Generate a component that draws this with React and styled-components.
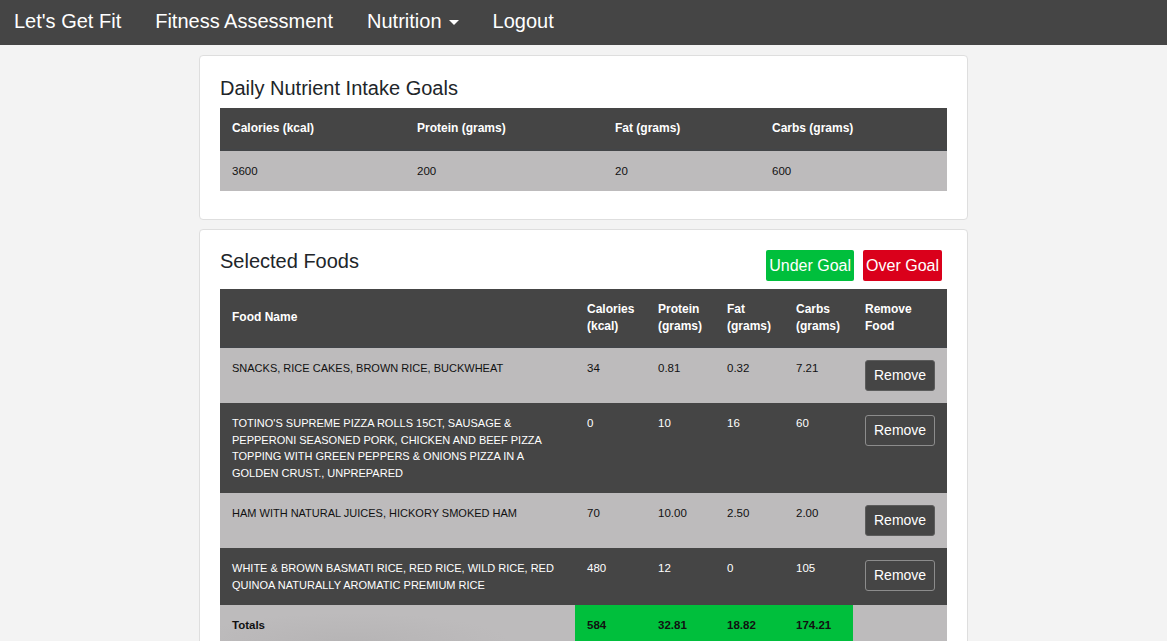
import styled, { createGlobalStyle } from "styled-components";

const GlobalStyle = createGlobalStyle`
  body {
    margin: 0;
    background: #f3f3f3;
    font-family: "Liberation Sans", Arial, sans-serif;
    color: #212529;
  }
`;

const goals = { calories: 3600, protein: 200, fat: 20, carbs: 600 };

const foods = [
  { name: "SNACKS, RICE CAKES, BROWN RICE, BUCKWHEAT", cal: "34", pro: "0.81", fat: "0.32", carbs: "7.21" },
  { name: "TOTINO'S SUPREME PIZZA ROLLS 15CT, SAUSAGE & PEPPERONI SEASONED PORK, CHICKEN AND BEEF PIZZA TOPPING WITH GREEN PEPPERS & ONIONS PIZZA IN A GOLDEN CRUST., UNPREPARED", cal: "0", pro: "10", fat: "16", carbs: "60" },
  { name: "HAM WITH NATURAL JUICES, HICKORY SMOKED HAM", cal: "70", pro: "10.00", fat: "2.50", carbs: "2.00" },
  { name: "WHITE & BROWN BASMATI RICE, RED RICE, WILD RICE, RED QUINOA NATURALLY AROMATIC PREMIUM RICE", cal: "480", pro: "12", fat: "0", carbs: "105" },
];

const totals = ["584", "32.81", "18.82", "174.21"];

const App = () => {
  return (
    <>
      <GlobalStyle />
      <Navbar>
        <Brand>Let's Get Fit</Brand>
        <NavLink>Fitness Assessment</NavLink>
        <NavLink>
          Nutrition <Caret />
        </NavLink>
        <NavLink>Logout</NavLink>
      </Navbar>

      <Main>
        <Card>
          <Title>Daily Nutrient Intake Goals</Title>
          <Table>
            <thead>
              <tr>
                <Th $w={185}>Calories (kcal)</Th>
                <Th $w={198}>Protein (grams)</Th>
                <Th $w={157}>Fat (grams)</Th>
                <Th>Carbs (grams)</Th>
              </tr>
            </thead>
            <tbody>
              <Row $light>
                <Td>{goals.calories}</Td>
                <Td>{goals.protein}</Td>
                <Td>{goals.fat}</Td>
                <Td>{goals.carbs}</Td>
              </Row>
            </tbody>
          </Table>
        </Card>

        <Card>
          <CardHeader>
            <Title>Selected Foods</Title>
            <Legend>
              <Badge $color="#00bf3c">Under Goal</Badge>
              <Badge $color="#da001b">Over Goal</Badge>
            </Legend>
          </CardHeader>
          <Table>
            <thead>
              <tr>
                <Th $w={355}>Food Name</Th>
                <Th $w={71}>Calories (kcal)</Th>
                <Th $w={69}>Protein (grams)</Th>
                <Th $w={69}>Fat (grams)</Th>
                <Th $w={69}>Carbs (grams)</Th>
                <Th>Remove Food</Th>
              </tr>
            </thead>
            <tbody>
              {foods.map((f, i) => (
                <Row key={i} $light={i % 2 === 0}>
                  <Td $name>{f.name}</Td>
                  <Td>{f.cal}</Td>
                  <Td>{f.pro}</Td>
                  <Td>{f.fat}</Td>
                  <Td>{f.carbs}</Td>
                  <Td>
                    <RemoveButton $light={i % 2 === 0}>Remove</RemoveButton>
                  </Td>
                </Row>
              ))}
              <TotalsRow>
                <Td $bold>Totals</Td>
                {totals.map((t, i) => (
                  <Td key={i} $bold $good>{t}</Td>
                ))}
                <Td />
              </TotalsRow>
            </tbody>
          </Table>
        </Card>
      </Main>
    </>
  );
};

export default App;

const Navbar = styled.nav`
  height: 45px;
  background: #454545;
  display: flex;
  align-items: center;
  padding: 0 14px 2px;
  box-sizing: border-box;
`;

const Brand = styled.a`
  color: #fff;
  font-size: 20px;
  margin-right: 18px;
  white-space: nowrap;
`;

const NavLink = styled.a`
  color: #fff;
  font-size: 20px;
  padding: 0 16px;
  white-space: nowrap;
  display: flex;
  align-items: center;
  & + & {
    padding-left: 18px;
  }
`;

const Caret = styled.span`
  display: inline-block;
  margin-left: 7px;
  margin-top: 2px;
  width: 0;
  height: 0;
  border-left: 5.5px solid transparent;
  border-right: 5.5px solid transparent;
  border-top: 5.5px solid #fff;
`;

const Main = styled.main`
  width: 769px;
  margin: 10px auto 0;
  display: flex;
  flex-direction: column;
  gap: 9px;
`;

const Card = styled.section`
  background: #fff;
  border: 1px solid #dedede;
  border-radius: 4px;
  padding: 20px;
  box-sizing: border-box;
`;

const CardHeader = styled.div`
  display: flex;
  justify-content: space-between;
  align-items: flex-start;
  margin-bottom: 8px;
`;

const Title = styled.h2`
  margin: 0 0 8px;
  font-size: 20px;
  font-weight: 500;
  line-height: 24px;
  color: #212529;
  ${CardHeader} & {
    margin: -1px 0 0;
  }
`;

const Legend = styled.div`
  display: flex;
  gap: 9px;
  padding-right: 5px;
`;

const Badge = styled.span`
  background: ${props => props.$color};
  color: #fff;
  font-size: 16px;
  line-height: 19px;
  padding: 6px 3px;
  border-radius: 2px;
`;

const Table = styled.table`
  width: 100%;
  border-collapse: collapse;
  table-layout: fixed;
  margin-bottom: 8px;
  font-size: 11px;
  line-height: 16.5px;
`;

const Th = styled.th`
  box-sizing: border-box;
  background: #454545;
  color: #fff;
  text-align: left;
  font-size: 12px;
  font-weight: 700;
  vertical-align: middle;
  padding: 12px;
  border-bottom: 2px solid #434548;
  width: ${props => (props.$w ? `${props.$w}px` : "auto")};
`;

const Row = styled.tr`
  background: ${props => (props.$light ? "#bdbbbc" : "#454545")};
  color: ${props => (props.$light ? "#111" : "#fff")};
`;

const TotalsRow = styled.tr`
  background: radial-gradient(ellipse 160px 30px at 130px 38px, #b6b4b5, #bdbbbc);
  color: #111;
`;

const Td = styled.td`
  box-sizing: border-box;
  padding: 12px;
  vertical-align: top;
  font-size: ${props => (props.$name ? "11px" : "11.5px")};
  font-weight: ${props => (props.$bold ? 700 : 400)};
  background: ${props => (props.$good ? "#00bf3c" : "transparent")};
`;

const RemoveButton = styled.button`
  font-family: inherit;
  font-size: 14px;
  line-height: 17px;
  color: #fff;
  padding: 6px 8px;
  border-radius: 3px;
  background: ${props => (props.$light ? "#454545" : "transparent")};
  border: 1px solid ${props => (props.$light ? "#5c5c5c" : "#8c8c8c")};
  cursor: pointer;
`;
